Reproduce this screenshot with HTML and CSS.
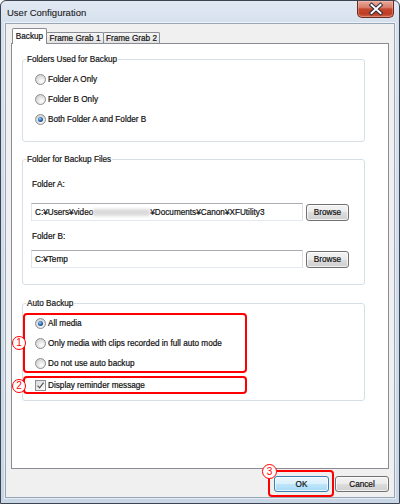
FILE: index.html
```html
<!DOCTYPE html>
<html>
<head>
<meta charset="utf-8">
<title>User Configuration</title>
<link rel="stylesheet" href="styles.css">
</head>
<body>
<div class="window">
  <div class="titlebar">
    <span class="title">User Configuration</span>
    <div class="close" aria-label="Close">
      <svg width="35" height="16" viewBox="0 0 35 16"><path d="M13.5 4 L22.5 12 M22.5 4 L13.5 12" stroke="#24263a" stroke-width="3.8" stroke-linecap="square" fill="none"/><path d="M13.5 4 L22.5 12 M22.5 4 L13.5 12" stroke="#ffffff" stroke-width="2" stroke-linecap="square" fill="none"/></svg>
    </div>
  </div>
  <div class="client">
    <div class="tabs">
      <div class="tab tab-active w-backup">Backup</div>
      <div class="tab w-fg1">Frame Grab 1</div>
      <div class="tab w-fg2">Frame Grab 2</div>
    </div>
    <div class="panel">
      <fieldset class="group">
        <legend>Folders Used for Backup</legend>
        <div class="gbody">
          <div class="opt"><span class="radio"></span>Folder A Only</div>
          <div class="opt"><span class="radio"></span>Folder B Only</div>
          <div class="opt"><span class="radio on"></span>Both Folder A and Folder B</div>
        </div>
      </fieldset>
      <fieldset class="group g2">
        <legend>Folder for Backup Files</legend>
        <div class="gbody gbody-files">
          <div class="label">Folder A:</div>
          <div class="field-row row-a">
            <div class="textbox">C:¥Users¥video<span class="smudge"></span>¥Documents¥Canon¥XFUtility3</div>
            <div class="btn browse">Browse</div>
          </div>
          <div class="label label-b">Folder B:</div>
          <div class="field-row row-b">
            <div class="textbox">C:¥Temp</div>
            <div class="btn browse">Browse</div>
          </div>
        </div>
      </fieldset>
      <fieldset class="group g3">
        <legend>Auto Backup</legend>
        <div class="gbody gbody-auto">
          <div class="opt"><span class="radio on"></span>All media</div>
          <div class="opt"><span class="radio"></span>Only media with clips recorded in full auto mode</div>
          <div class="opt"><span class="radio"></span>Do not use auto backup</div>
          <div class="opt opt-check"><span class="check"><svg width="9" height="9" viewBox="0 0 9 9"><path d="M1.6 4.6 L3.6 6.9 L7.6 1.6" stroke="#555555" stroke-width="1.2" fill="none"/></svg></span>Display reminder message</div>
        </div>
      </fieldset>
    </div>
    <div class="actions">
      <div class="btn ok">OK</div>
      <div class="btn cancel">Cancel</div>
    </div>
  </div>
  <div class="mark rect1"></div>
  <div class="mark rect2"></div>
  <div class="mark rect3"></div>
  <div class="num n1">1</div>
  <div class="num n2">2</div>
  <div class="num n3">3</div>
</div>
</body>
</html>
```
FILE: styles.css
```css
* { box-sizing: border-box; }
html, body { margin: 0; padding: 0; }
body {
  width: 400px;
  height: 504px;
  overflow: hidden;
  background: #ffffff;
  font-family: "Liberation Sans", Arial, sans-serif;
  font-size: 8.2px;
  color: #111111;
  -webkit-text-stroke: 0.2px #111111;
}
.window {
  position: relative;
  width: 400px;
  height: 504px;
  border: 1px solid #3b4450;
  border-radius: 6px 6px 0 0;
  background: linear-gradient(#e1e9f3 0px, #d6e1ed 22px, #c8d6e5 100%);
  display: flex;
  flex-direction: column;
}
.titlebar {
  height: 22px;
  flex: none;
  display: flex;
  align-items: flex-start;
  justify-content: space-between;
  padding-left: 6px;
  padding-right: 5px;
}
.title {
  font-size: 9.5px;
  line-height: 22px;
  padding-top: 1px;
  color: #1b1b1b;
  -webkit-text-stroke: 0.1px #1b1b1b;
}
.close {
  width: 37px;
  height: 17px;
  border: 1px solid #6d2a20;
  border-top: 0;
  border-radius: 0 0 5px 5px;
  background: linear-gradient(#e9aa9c 0%, #d87e6a 40%, #c4472f 50%, #bf3b24 80%, #d0664a 100%);
  box-shadow: inset 0 0 0 1px rgba(255, 210, 200, 0.35);
}
.close svg { display: block; }
.client {
  flex: 1;
  margin: 0 4px 5px 4px;
  border: 1px solid #97a7b8;
  background: #f0f0f0;
  display: flex;
  flex-direction: column;
  padding: 4px 5px 5px 5px;
  box-shadow: 0 0 0 1px rgba(255, 255, 255, 0.55);
}
.tabs {
  display: flex;
  align-items: flex-end;
  height: 15px;
  flex: none;
  padding-left: 1px;
  position: relative;
  z-index: 1;
}
.tab {
  height: 11px;
  margin-left: -1px;
  border: 1px solid #898c95;
  border-bottom: 0;
  border-radius: 2px 2px 0 0;
  background: linear-gradient(#f6f6f6, #e2e2e2);
  display: flex;
  align-items: center;
  justify-content: center;
  white-space: nowrap;
  color: #151515;
}
.tab-active {
  height: 16px;
  margin-left: 0;
  margin-bottom: -1px;
  background: #ffffff;
  position: relative;
  z-index: 2;
  padding-bottom: 1px;
}
.w-backup { width: 35px; }
.w-fg1 { width: 58px; }
.w-fg2 { width: 57px; }
.panel {
  flex: 1;
  background: #ffffff;
  border: 1px solid #898c95;
  padding: 10px 0 0 10px;
}
.group {
  width: 343px;
  margin: 0;
  padding: 0;
  min-width: 0;
  border: 1px solid #d5dfe5;
  border-radius: 3px;
}
.group legend {
  margin-left: 3px;
  padding: 0 1px;
  height: 11px;
  line-height: 11px;
  color: #1a1a1a;
}
.g2 { margin-top: 12px; }
.g3 { margin-top: 13px; }
.gbody { padding: 4px 0 12px 12px; }
.gbody-files { padding: 14px 0 16px 8px; }
.gbody-auto { padding: 4px 0 5px 12px; }
.opt {
  display: flex;
  align-items: center;
  height: 20px;
  white-space: nowrap;
}
.opt-check { margin-top: 2px; }
.radio {
  flex: none;
  position: relative;
  width: 11px;
  height: 11px;
  margin-right: 2px;
  border: 1px solid #8c8e90;
  border-radius: 50%;
  background: radial-gradient(circle at 62% 68%, #ffffff 0%, #eaeaea 35%, #c2c4c6 100%);
}
.radio.on::after {
  content: "";
  position: absolute;
  left: 2px;
  top: 2px;
  width: 5px;
  height: 5px;
  border-radius: 50%;
  background: radial-gradient(circle at 40% 35%, #9fd0f4 0%, #2d6cb6 45%, #0e2f66 100%);
}
.check {
  flex: none;
  width: 11px;
  height: 11px;
  margin-right: 2px;
  border: 1px solid #8c8e90;
  background: linear-gradient(135deg, #d9dadb, #ffffff);
  display: flex;
  align-items: center;
  justify-content: center;
}
.check svg { display: block; }
.label {
  line-height: 12px;
  height: 12px;
  padding-left: 1px;
}
.label-b { margin-top: 10px; }
.field-row {
  display: flex;
  height: 18px;
  gap: 3px;
}
.row-a { margin-top: 12px; }
.row-b { margin-top: 7px; }
.textbox {
  width: 272px;
  height: 18px;
  border: 1px solid;
  border-color: #abadb3 #dbdfe6 #e3e9ef #e2e3ea;
  background: #ffffff;
  padding-left: 3px;
  display: flex;
  align-items: center;
  white-space: nowrap;
  overflow: hidden;
}
.smudge {
  display: inline-block;
  width: 57px;
  height: 7px;
  background: #dadada;
  filter: blur(1.6px);
}
.btn {
  display: flex;
  align-items: center;
  justify-content: center;
  border: 1px solid #707070;
  border-radius: 3px;
  background: linear-gradient(#f3f3f3 0%, #ebebeb 50%, #dddddd 50%, #cfcfcf 100%);
  box-shadow: inset 0 0 0 1px rgba(255, 255, 255, 0.7);
  color: #111111;
}
.browse {
  width: 43px;
  height: 17px;
  align-self: flex-end;
}
.actions {
  display: flex;
  justify-content: flex-end;
  gap: 6px;
  margin-top: 7px;
  height: 16px;
  flex: none;
}
.ok {
  width: 55px;
  height: 16px;
  border-color: #3c7fb1;
  background: linear-gradient(#eaf6fd 0%, #d9f0fc 50%, #bee6fd 50%, #a7d9f5 100%);
}
.cancel {
  width: 54px;
  height: 16px;
}
.mark {
  position: absolute;
  border: 2px solid #ff0000;
  border-radius: 4px;
}
.rect1 { left: 22px; top: 312px; width: 224px; height: 60px; }
.rect2 { left: 22px; top: 375px; width: 224px; height: 18px; }
.rect3 { left: 267px; top: 469px; width: 66px; height: 27px; }
.num {
  position: absolute;
  width: 14px;
  height: 14px;
  border: 1.5px solid #ff0000;
  border-radius: 50%;
  background: #ffffff;
  color: #ff0000;
  -webkit-text-stroke: 0;
  font-size: 10px;
  line-height: 1;
  display: flex;
  align-items: center;
  justify-content: center;
}
.n1 { left: 11px; top: 335px; }
.n2 { left: 11px; top: 378px; }
.n3 { left: 261px; top: 463px; width: 15px; height: 15px; }
```
